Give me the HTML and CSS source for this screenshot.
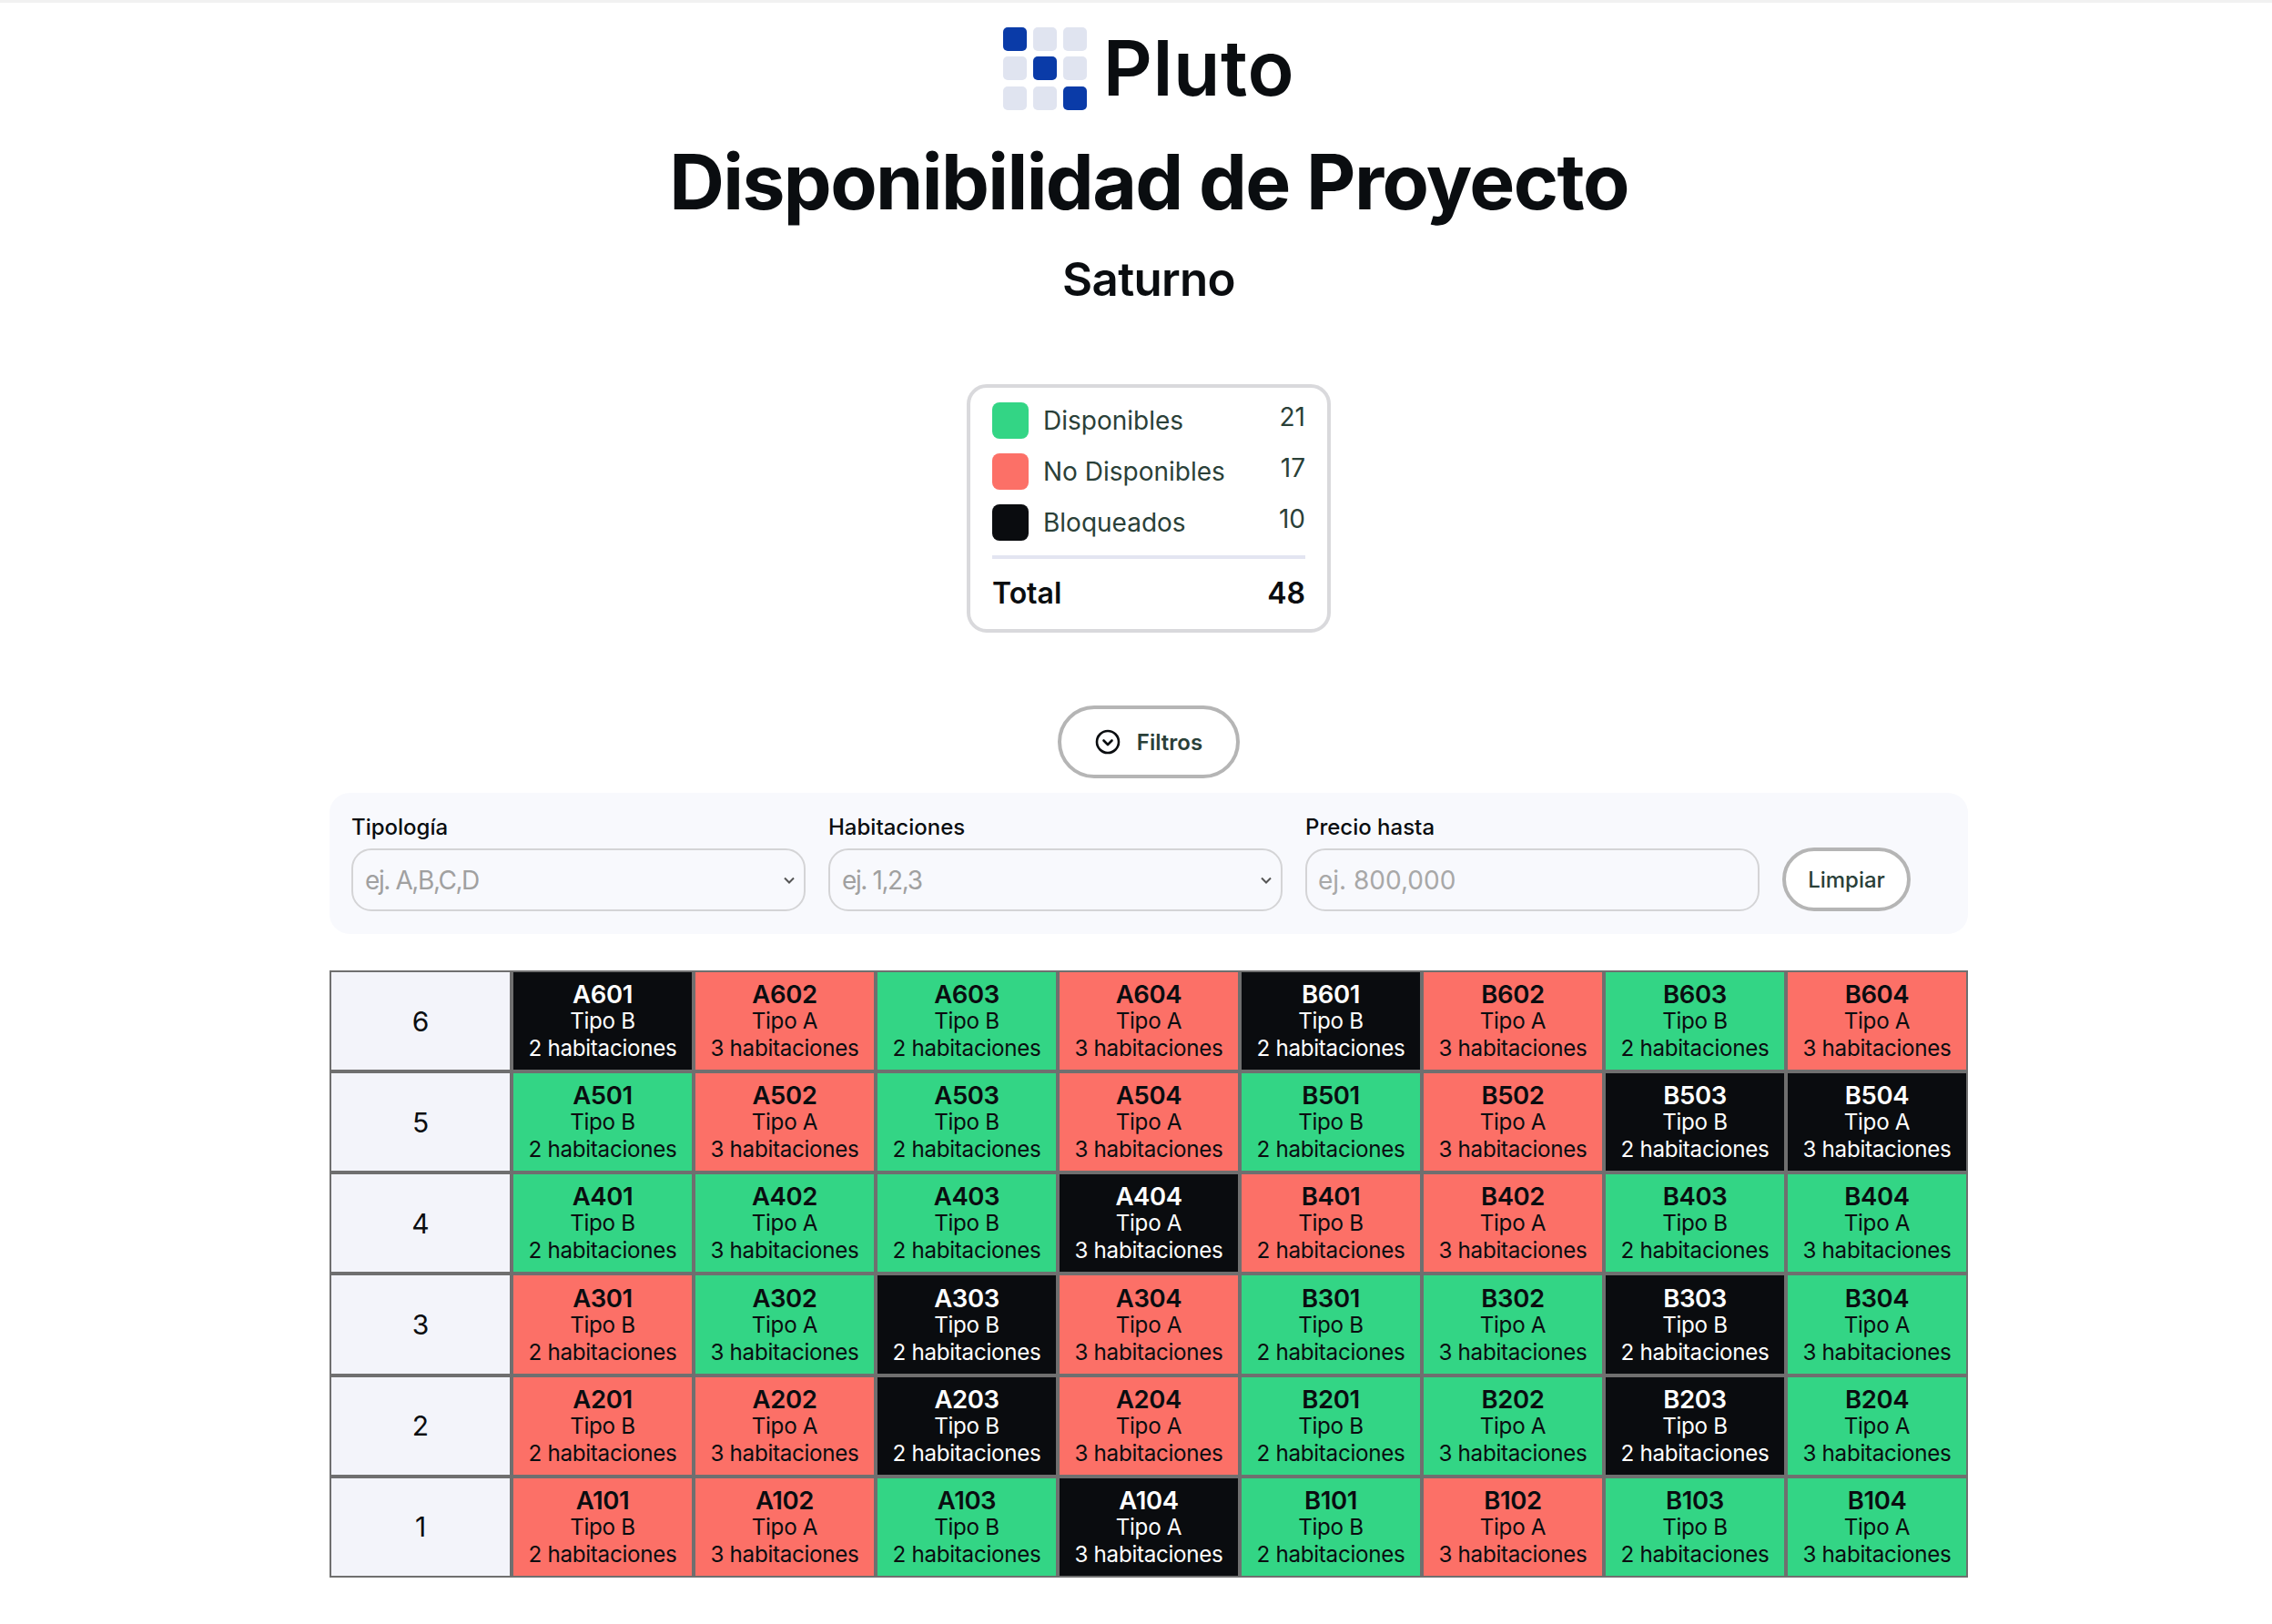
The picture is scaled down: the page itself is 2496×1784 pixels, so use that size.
FILE: index.html
```html
<!DOCTYPE html>
<html lang="es">
<head>
<meta charset="utf-8">
<title>Disponibilidad de Proyecto</title>
<link rel="stylesheet" href="styles.css">
</head>
<body>
<main class="page">
<header class="top">
  <div class="logo">
    <svg class="logo-mark" width="92" height="91" viewBox="0 0 92 91">
      <rect class="on" x="0" y="0" width="26" height="26" rx="5"/><rect class="off" x="33" y="0" width="26" height="26" rx="5"/><rect class="off" x="66" y="0" width="26" height="26" rx="5"/>
      <rect class="off" x="0" y="32" width="26" height="26" rx="5"/><rect class="on" x="33" y="32" width="26" height="26" rx="5"/><rect class="off" x="66" y="32" width="26" height="26" rx="5"/>
      <rect class="off" x="0" y="65" width="26" height="26" rx="5"/><rect class="off" x="33" y="65" width="26" height="26" rx="5"/><rect class="on" x="66" y="65" width="26" height="26" rx="5"/>
    </svg>
    <span class="logo-text">Pluto</span>
  </div>
  <h1>Disponibilidad de Proyecto</h1>
  <h2>Saturno</h2>
</header>

<section class="legend">
  <div class="legend-row"><span class="swatch green"></span><span class="legend-name">Disponibles</span><span class="legend-num">21</span></div>
  <div class="legend-row"><span class="swatch red"></span><span class="legend-name">No Disponibles</span><span class="legend-num">17</span></div>
  <div class="legend-row"><span class="swatch black"></span><span class="legend-name">Bloqueados</span><span class="legend-num">10</span></div>
  <div class="legend-total"><span>Total</span><span>48</span></div>
</section>

<div class="filter-toggle">
  <button class="btn-filter" type="button">
    <svg width="28" height="28" viewBox="0 0 28 28" fill="none" stroke="#0a0d10" stroke-width="2.6" stroke-linecap="round" stroke-linejoin="round"><circle cx="14" cy="14" r="12"/><path d="M9.5 12.5l4.5 4.5 4.5-4.5"/></svg>
    <span>Filtros</span>
  </button>
</div>

<form class="filters">
  <label class="field"><span class="field-label">Tipología</span>
    <select class="control control-select"><option>ej. A,B,C,D</option></select></label>
  <label class="field"><span class="field-label">Habitaciones</span>
    <select class="control control-select"><option>ej. 1,2,3</option></select></label>
  <label class="field"><span class="field-label">Precio hasta</span>
    <input class="control" type="text" placeholder="ej. 800,000"></label>
  <button class="btn-clear" type="button">Limpiar</button>
</form>

<table class="grid">
<tbody>
<tr><th>6</th>
<td class="black"><b>A601</b>Tipo B<br>2 habitaciones</td><td class="red"><b>A602</b>Tipo A<br>3 habitaciones</td><td class="green"><b>A603</b>Tipo B<br>2 habitaciones</td><td class="red"><b>A604</b>Tipo A<br>3 habitaciones</td><td class="black"><b>B601</b>Tipo B<br>2 habitaciones</td><td class="red"><b>B602</b>Tipo A<br>3 habitaciones</td><td class="green"><b>B603</b>Tipo B<br>2 habitaciones</td><td class="red"><b>B604</b>Tipo A<br>3 habitaciones</td></tr>
<tr><th>5</th>
<td class="green"><b>A501</b>Tipo B<br>2 habitaciones</td><td class="red"><b>A502</b>Tipo A<br>3 habitaciones</td><td class="green"><b>A503</b>Tipo B<br>2 habitaciones</td><td class="red"><b>A504</b>Tipo A<br>3 habitaciones</td><td class="green"><b>B501</b>Tipo B<br>2 habitaciones</td><td class="red"><b>B502</b>Tipo A<br>3 habitaciones</td><td class="black"><b>B503</b>Tipo B<br>2 habitaciones</td><td class="black"><b>B504</b>Tipo A<br>3 habitaciones</td></tr>
<tr><th>4</th>
<td class="green"><b>A401</b>Tipo B<br>2 habitaciones</td><td class="green"><b>A402</b>Tipo A<br>3 habitaciones</td><td class="green"><b>A403</b>Tipo B<br>2 habitaciones</td><td class="black"><b>A404</b>Tipo A<br>3 habitaciones</td><td class="red"><b>B401</b>Tipo B<br>2 habitaciones</td><td class="red"><b>B402</b>Tipo A<br>3 habitaciones</td><td class="green"><b>B403</b>Tipo B<br>2 habitaciones</td><td class="green"><b>B404</b>Tipo A<br>3 habitaciones</td></tr>
<tr><th>3</th>
<td class="red"><b>A301</b>Tipo B<br>2 habitaciones</td><td class="green"><b>A302</b>Tipo A<br>3 habitaciones</td><td class="black"><b>A303</b>Tipo B<br>2 habitaciones</td><td class="red"><b>A304</b>Tipo A<br>3 habitaciones</td><td class="green"><b>B301</b>Tipo B<br>2 habitaciones</td><td class="green"><b>B302</b>Tipo A<br>3 habitaciones</td><td class="black"><b>B303</b>Tipo B<br>2 habitaciones</td><td class="green"><b>B304</b>Tipo A<br>3 habitaciones</td></tr>
<tr><th>2</th>
<td class="red"><b>A201</b>Tipo B<br>2 habitaciones</td><td class="red"><b>A202</b>Tipo A<br>3 habitaciones</td><td class="black"><b>A203</b>Tipo B<br>2 habitaciones</td><td class="red"><b>A204</b>Tipo A<br>3 habitaciones</td><td class="green"><b>B201</b>Tipo B<br>2 habitaciones</td><td class="green"><b>B202</b>Tipo A<br>3 habitaciones</td><td class="black"><b>B203</b>Tipo B<br>2 habitaciones</td><td class="green"><b>B204</b>Tipo A<br>3 habitaciones</td></tr>
<tr><th>1</th>
<td class="red"><b>A101</b>Tipo B<br>2 habitaciones</td><td class="red"><b>A102</b>Tipo A<br>3 habitaciones</td><td class="green"><b>A103</b>Tipo B<br>2 habitaciones</td><td class="black"><b>A104</b>Tipo A<br>3 habitaciones</td><td class="green"><b>B101</b>Tipo B<br>2 habitaciones</td><td class="red"><b>B102</b>Tipo A<br>3 habitaciones</td><td class="green"><b>B103</b>Tipo B<br>2 habitaciones</td><td class="green"><b>B104</b>Tipo A<br>3 habitaciones</td></tr>
</tbody>
</table>
</main>
</body>
</html>
```
FILE: styles.css
```css
* { box-sizing: border-box; }
html, body { margin: 0; padding: 0; }
body {
  width: 2496px;
  height: 1784px;
  overflow: hidden;
  background: #fff;
  border-top: 3px solid #f1f1f1;
  color: #0a0d10;
  font-family: "Inter", "Liberation Sans", sans-serif;
}
.page { width: 1800px; margin-left: 362px; }
.top { display: flex; flex-direction: column; align-items: center; padding-top: 15px; }
.logo { display: flex; align-items: center; height: 114px; }
.logo-mark { margin-right: 18px; }
.logo-mark .on { fill: #0a3ba8; }
.logo-mark .off { fill: #e0e4f0; }
.logo-text { font-size: 84px; line-height: 114px; font-weight: 600; letter-spacing: 0.6px; }
h1 { margin: 8px 0 0; font-size: 84px; line-height: 120px; font-weight: 700; letter-spacing: -1.6px; white-space: nowrap; }
h2 { margin: 12px 0 0; font-size: 51px; line-height: 70px; font-weight: 600; letter-spacing: -0.7px; }

.legend {
  width: 400px;
  height: 273px;
  margin: 80px auto 0;
  padding: 16px 24px 0;
  border: 4px solid #d9d9dc;
  border-radius: 22px;
  color: #2a4038;
}
.legend-row { display: flex; align-items: center; height: 40px; margin-bottom: 16px; font-size: 28px; }
.swatch { width: 40px; height: 40px; border-radius: 8px; margin-right: 16px; flex: none; }
.swatch.green, td.green { background: #33d585; }
.swatch.red, td.red { background: #fc7067; }
.swatch.black, td.black { background: #0a0c0f; }
.legend-name { flex: 1; }
.legend-num { margin-top: -8px; }
.legend-total {
  display: flex;
  justify-content: space-between;
  align-items: center;
  margin-top: 16px;
  padding-top: 18px;
  border-top: 4px solid #e3e5f1;
  font-size: 32px;
  font-weight: 600;
  color: #0a0d10;
}

.filter-toggle { display: flex; justify-content: center; margin-top: 80px; }
.btn-filter {
  display: flex;
  align-items: center;
  justify-content: center;
  gap: 18px;
  width: 200px;
  height: 80px;
  padding: 0;
  background: #fff;
  border: 4px solid #b5b5b5;
  border-radius: 40px;
  font: 600 24px "Inter", sans-serif;
  color: #2a4038;
}

.filters {
  display: grid;
  grid-template-columns: 499px 499px 499px 141px;
  column-gap: 25px;
  align-items: end;
  height: 155px;
  margin-top: 16px;
  padding: 24px 25px 25px 24px;
  background: #f8f9fd;
  border-radius: 22px;
}
.field { display: flex; flex-direction: column; }
.field-label { height: 37px; font-size: 24px; line-height: 28px; font-weight: 500; }
.control {
  width: 100%;
  height: 69px;
  padding: 0 12px;
  background-color: #f8f9fd;
  border: 2px solid #d4d4d6;
  border-radius: 22px;
  font: 400 28px "Inter", sans-serif;
  color: #a0a0a0;
  outline: none;
}
.control-select {
  appearance: none;
  padding: 0 30px 0 13px;
  letter-spacing: -1.4px;
  background-image: url("data:image/svg+xml,%3Csvg xmlns='http://www.w3.org/2000/svg' width='14' height='10' viewBox='0 0 14 10'%3E%3Cpath d='M2 2.5l5 5 5-5' fill='none' stroke='%23555' stroke-width='2'/%3E%3C/svg%3E");
  background-repeat: no-repeat;
  background-position: right 9px center;
}
.control::placeholder { color: #a8a8a8; opacity: 1; }
.btn-clear {
  height: 70px;
  padding: 0;
  background: #fff;
  border: 4px solid #b5b5b5;
  border-radius: 35px;
  font: 500 24px "Inter", sans-serif;
  color: #2a4038;
}

.grid {
  width: 1800px;
  height: 667px;
  margin-top: 40px;
  border-collapse: separate;
  border-spacing: 0;
  table-layout: fixed;
}
.grid th, .grid td {
  padding: 0;
  border: 2px solid #6f6f6f;
  text-align: center;
  vertical-align: middle;
}
.grid th { background: #f3f4fa; font-size: 30px; font-weight: 400; }
.grid td { padding-top: 1px; font-size: 24.2px; line-height: 30px; letter-spacing: -0.3px; }
.grid td b { display: block; font-size: 27.5px; font-weight: 600; letter-spacing: -0.4px; }
.grid td.black { color: #fff; }
```
